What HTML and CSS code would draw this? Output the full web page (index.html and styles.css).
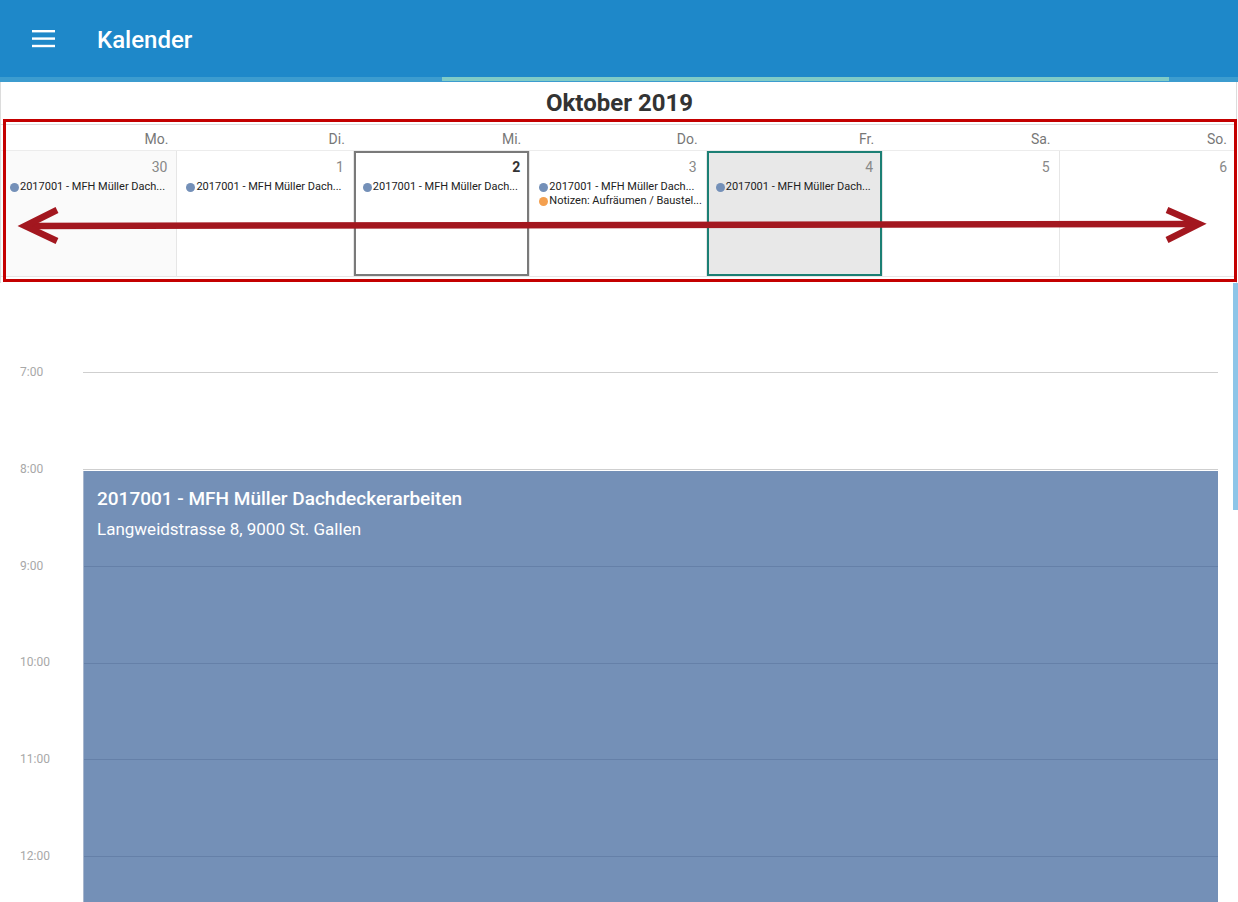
FILE: index.html
```html
<!DOCTYPE html>
<html lang="de">
<head>
<meta charset="utf-8">
<title>Kalender</title>
<link rel="stylesheet" href="styles.css">
</head>
<body>
<header class="appbar">
  <svg class="menu-icon" width="23" height="18" viewBox="0 0 23 18" aria-hidden="true">
    <rect x="0" y="0" width="23" height="2.4" fill="#fff"/>
    <rect x="0" y="7.4" width="23" height="2.4" fill="#fff"/>
    <rect x="0" y="14.8" width="23" height="2.4" fill="#fff"/>
  </svg>
  <div class="appbar-title">Kalender</div>
</header>
<div class="tabstrip"><div class="tab-indicator"></div></div>

<section class="month-panel">
  <div class="month-title">Oktober 2019</div>
  <div class="weekdays">
    <div class="wd">Mo.</div><div class="wd">Di.</div><div class="wd">Mi.</div><div class="wd">Do.</div><div class="wd">Fr.</div><div class="wd">Sa.</div><div class="wd">So.</div>
  </div>
  <div class="days">
    <div class="day other">
      <div class="num">30</div>
      <div class="ev"><span class="dot blue"></span>2017001 - MFH Müller Dach...</div>
    </div>
    <div class="day">
      <div class="num">1</div>
      <div class="ev"><span class="dot blue"></span>2017001 - MFH Müller Dach...</div>
    </div>
    <div class="day today">
      <div class="num bold">2</div>
      <div class="ev"><span class="dot blue"></span>2017001 - MFH Müller Dach...</div>
    </div>
    <div class="day">
      <div class="num">3</div>
      <div class="ev"><span class="dot blue"></span>2017001 - MFH Müller Dach...</div>
      <div class="ev"><span class="dot orange"></span>Notizen: Aufräumen / Baustel...</div>
    </div>
    <div class="day selected">
      <div class="num">4</div>
      <div class="ev"><span class="dot blue"></span>2017001 - MFH Müller Dach...</div>
    </div>
    <div class="day">
      <div class="num">5</div>
    </div>
    <div class="day last">
      <div class="num">6</div>
    </div>
  </div>
  <div class="red-box"></div>
  <svg class="arrow" width="1238" height="60" viewBox="0 0 1238 60" aria-hidden="true">
    <g stroke="#a3171f" stroke-width="6.5" fill="none" stroke-linecap="butt" stroke-linejoin="miter">
      <line x1="28" y1="33" x2="1196" y2="31"/>
      <polyline points="57,17 25,33 57,48"/>
      <polyline points="1167,17 1199,31 1167,47"/>
    </g>
  </svg>
</section>

<section class="timeline">
  <div class="hour"><div class="hour-label">7:00</div><div class="hour-line"></div></div>
  <div class="hour"><div class="hour-label">8:00</div><div class="hour-line"></div></div>
  <div class="hour"><div class="hour-label">9:00</div><div class="hour-line"></div></div>
  <div class="hour"><div class="hour-label">10:00</div><div class="hour-line"></div></div>
  <div class="hour"><div class="hour-label">11:00</div><div class="hour-line"></div></div>
  <div class="hour"><div class="hour-label">12:00</div><div class="hour-line"></div></div>
  <div class="event">
    <div class="event-title">2017001 - MFH Müller Dachdeckerarbeiten</div>
    <div class="event-sub">Langweidstrasse 8, 9000 St. Gallen</div>
  </div>
  <div class="scrollbar"></div>
</section>
</body>
</html>
```

FILE: styles.css
```css
* { box-sizing: border-box; }
html, body {
  margin: 0;
  padding: 0;
  width: 1238px;
  height: 902px;
  overflow: hidden;
  background: #fff;
  font-family: Roboto, "Liberation Sans", sans-serif;
}

.appbar {
  height: 77px;
  background: #1e88c9;
  display: flex;
  align-items: center;
  padding-left: 32px;
}
.menu-icon { width: 23px; height: 18px; margin-top: 1px; flex: none; }
.appbar-title {
  margin-left: 42px;
  color: #fff;
  font-size: 24px;
  font-weight: 500;
  margin-top: 2px;
}
.tabstrip {
  height: 5px;
  background: #3c9ccf;
  padding-left: 442px;
}
.tab-indicator {
  width: 727px;
  height: 4px;
  background: #7fcbc7;
}

.month-panel {
  position: relative;
  border-left: 1px solid #dcdcdc;
  border-right: 1px solid #dcdcdc;
  width: 1237px;
  padding-bottom: 6px;
}
.month-title {
  height: 42px;
  text-align: center;
  font-size: 24px;
  font-weight: 700;
  color: #333;
  line-height: 42px;
  padding-left: 2px;
}
.weekdays {
  display: grid;
  grid-template-columns: repeat(7, minmax(0, 1fr));
  border-top: 1px solid #dddddd;
  height: 26px;
}
.wd {
  text-align: right;
  padding-right: 9px;
  font-size: 14px;
  color: #777;
  line-height: 28px;
}
.days {
  display: grid;
  grid-template-columns: repeat(7, minmax(0, 1fr));
  border-top: 1px solid #ececec;
  border-bottom: 1px solid #e6e6e6;
}
.day {
  min-width: 0;
  height: 125px;
  border-right: 1px solid #e6e6e6;
  padding: 8px 9px 0 9px;
}
.day.last { border-right: none; }
.day.other { background: #fafafa; }
.day.today { box-shadow: inset 0 0 0 2px #7a7a7a; }
.day.selected { background: #e8e8e8; box-shadow: inset 0 0 0 2px #1b7f74; }
.num {
  text-align: right;
  font-size: 14px;
  line-height: 16px;
  color: #888;
  margin-bottom: 5px;
}
.num.bold { color: #333; font-weight: 700; }
.ev {
  display: flex;
  align-items: center;
  font-size: 11px;
  line-height: 14px;
  color: #222;
  white-space: nowrap;
  margin-right: -6px;
}
.dot {
  width: 9px;
  height: 9px;
  border-radius: 50%;
  margin-right: 1px;
  flex: none;
}
.dot.blue { background: #7490b8; }
.dot.orange { background: #f4a04f; }

.red-box {
  position: absolute;
  left: 2px;
  top: 37px;
  width: 1234px;
  height: 163px;
  border: 3px solid #c40000;
  pointer-events: none;
}
.arrow {
  position: absolute;
  left: -1px;
  top: 111px;
  pointer-events: none;
}

.timeline {
  position: relative;
  height: 619px;
  overflow: hidden;
  padding-top: 89px;
}
.hour {
  display: flex;
  height: 96.8px;
}
.hour-label {
  width: 83px;
  padding-left: 20px;
  font-size: 12px;
  line-height: 14px;
  color: #a8a8a8;
  margin-top: -7px;
  flex: none;
}
.hour-line {
  flex: 1;
  margin-right: 20px;
  border-top: 1.5px solid #cfcfcf;
}
.event {
  position: absolute;
  left: 83px;
  right: 20px;
  top: 188px;
  bottom: 0;
  background-color: #7490b7;
  background-image: repeating-linear-gradient(to bottom, transparent 0, transparent 95.8px, #6580a8 95.8px, #6580a8 96.8px);
  background-position: 0 -1px;
  border-left: 1px solid #a7b6cd;
  padding: 16px 0 0 13px;
  color: #fff;
}
.event-title {
  font-size: 19px;
  font-weight: 500;
  line-height: 24px;
}
.event-sub {
  font-size: 17px;
  line-height: 22px;
  margin-top: 7px;
}
.scrollbar {
  position: absolute;
  left: 1233px;
  top: 0;
  width: 5px;
  height: 227px;
  background: #8ec5e8;
}
```
